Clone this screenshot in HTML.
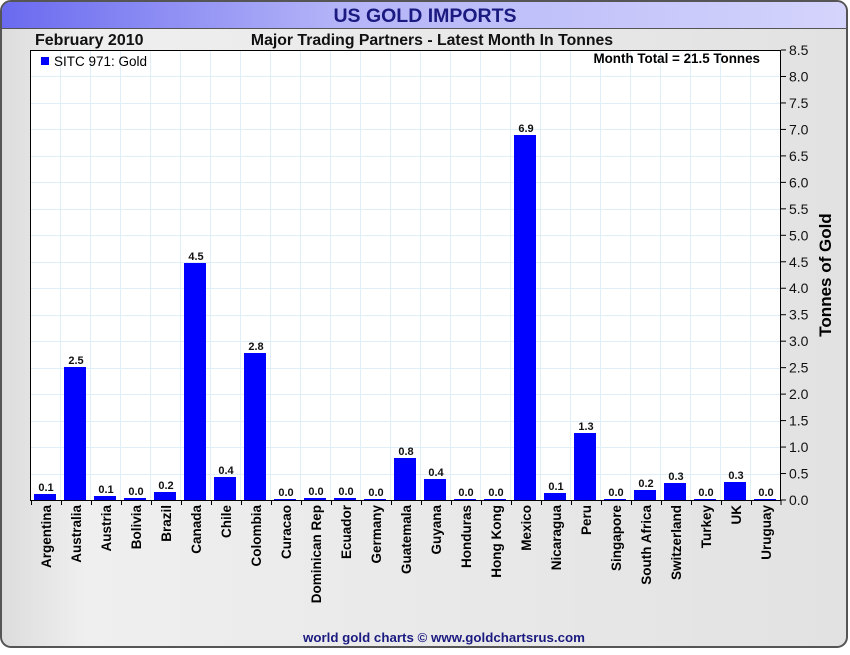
<!DOCTYPE html>
<html><head><meta charset="utf-8"><style>
body{margin:0;width:850px;height:650px;background:#fff;overflow:hidden;font-family:"Liberation Sans",sans-serif}
</style></head><body>
<svg width="850" height="650" xmlns="http://www.w3.org/2000/svg" font-family="Liberation Sans, sans-serif">
<defs>
<linearGradient id="bg" x1="0" x2="1" y1="0" y2="0"><stop offset="0" stop-color="#dcdcdc"/><stop offset="0.1" stop-color="#efefef"/><stop offset="1" stop-color="#e2e2e2"/></linearGradient>
<linearGradient id="tb" x1="0" x2="1" y1="0" y2="0"><stop offset="0" stop-color="#6a6af0"/><stop offset="0.4" stop-color="#b4b4f8"/><stop offset="1" stop-color="#d4d4fc"/></linearGradient>
</defs>
<rect x="1" y="1" width="846" height="646" rx="10" fill="url(#bg)" stroke="#555" stroke-width="2"/>
<path d="M2 28 V12 Q2 2 12 2 H836 Q846 2 846 12 V28 Z" fill="url(#tb)"/>
<line x1="2" y1="28.5" x2="846" y2="28.5" stroke="#555"/>
<text x="425" y="22" text-anchor="middle" font-size="19.5" font-weight="bold" fill="#1a1a80">US GOLD IMPORTS</text>
<text x="35" y="45" font-size="16" font-weight="bold" fill="#111">February 2010</text>
<text x="432" y="45" text-anchor="middle" font-size="15.8" font-weight="bold" fill="#111">Major Trading Partners - Latest Month In Tonnes</text>
<rect x="30.5" y="50.5" width="750" height="450" fill="#fff" stroke="#000"/>
<g stroke="#e0eef8" stroke-width="1" id="grid"></g>
<g id="bars"></g>
<rect x="41" y="57" width="8" height="8" fill="#0000ff"/>
<text x="54" y="66" font-size="13.5" fill="#000">SITC 971: Gold</text>
<text x="760" y="63" text-anchor="end" font-size="13.4" font-weight="bold" fill="#000">Month Total = 21.5 Tonnes</text>
<text transform="translate(831,275) rotate(-90)" text-anchor="middle" font-size="17" font-weight="bold" fill="#000">Tonnes of Gold</text>
<text x="444" y="642" text-anchor="middle" font-size="13.3" font-weight="bold" fill="#1a1a80">world gold charts © www.goldchartsrus.com</text>
</svg>
<script>
var ns="http://www.w3.org/2000/svg",svg=document.querySelector("svg"),g=document.getElementById("grid"),b=document.getElementById("bars");
function el(t,a,p,txt){var e=document.createElementNS(ns,t);for(var k in a)e.setAttribute(k,a[k]);if(txt!=null)e.textContent=txt;(p||svg).appendChild(e);return e;}
for(var i=1;i<25;i++){var x=31+30*i;el("line",{x1:x-0.5,y1:51,x2:x-0.5,y2:500},g);}
for(var v=1;v<17;v++){var y=500-v*26.47;el("line",{x1:31,y1:Math.round(y)+0.5,x2:780,y2:Math.round(y)+0.5},g);}
var d=[["Argentina",494,"0.1"],["Australia",367,"2.5"],["Austria",496,"0.1"],["Bolivia",498,"0.0"],["Brazil",492,"0.2"],["Canada",263,"4.5"],["Chile",477,"0.4"],["Colombia",353,"2.8"],["Curacao",499,"0.0"],["Dominican Rep",498,"0.0"],["Ecuador",498,"0.0"],["Germany",499,"0.0"],["Guatemala",458,"0.8"],["Guyana",479,"0.4"],["Honduras",499,"0.0"],["Hong Kong",499,"0.0"],["Mexico",135,"6.9"],["Nicaragua",493,"0.1"],["Peru",433,"1.3"],["Singapore",499,"0.0"],["South Africa",490,"0.2"],["Switzerland",483,"0.3"],["Turkey",499,"0.0"],["UK",482,"0.3"],["Uruguay",499,"0.0"]];
d.forEach(function(r,i){var x0=31+30*i;
el("rect",{x:x0+3,y:r[1],width:22,height:500-r[1],fill:"#0000ff"},b);
el("text",{x:x0+15,y:r[1]-3,"text-anchor":"middle","font-size":"11","font-weight":"bold",fill:"#111"},b,r[2]);
el("line",{x1:x0+0.5,y1:500,x2:x0+0.5,y2:505,stroke:"#000"});
el("text",{transform:"translate("+(x0+20)+",505) rotate(-90)","text-anchor":"end","font-size":"13.5","font-weight":"bold",fill:"#000"},null,r[0]);});
el("line",{x1:781,y1:500,x2:781,y2:505,stroke:"#000"});
for(var v=0;v<=17;v++){var y=500-v*26.47;
el("line",{x1:781,y1:y,x2:786,y2:y,stroke:"#000"});
el("text",{x:789,y:y+5,"font-size":"14",fill:"#111"},null,(v/2).toFixed(1));}
</script>
</body></html>
